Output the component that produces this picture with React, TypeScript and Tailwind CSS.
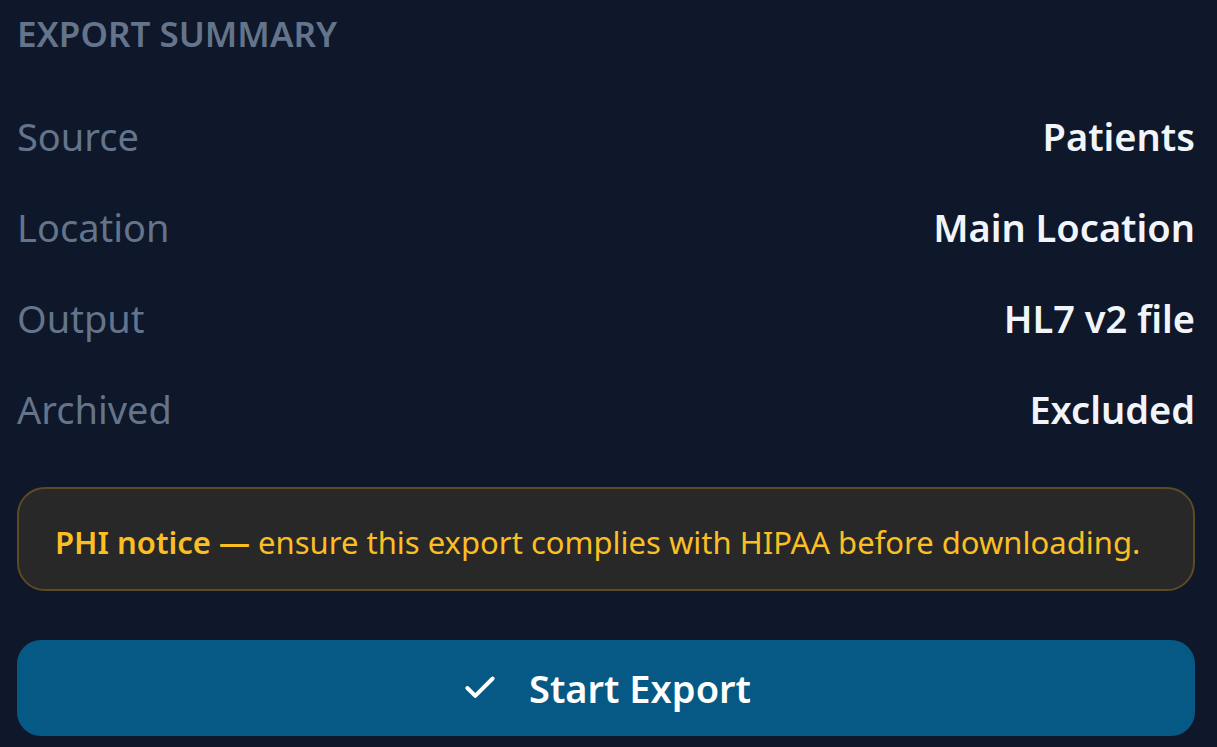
import { Check } from "lucide-react";

const rows = [
  { label: "Source", value: "Patients" },
  { label: "Location", value: "Main Location" },
  { label: "Output", value: "HL7 v2 file" },
  { label: "Archived", value: "Excluded" },
];

export default function App() {
  return (
    <div
      className="min-h-screen w-full bg-[#0f172a] pl-[17px] pr-[22px] pt-[8px]"
      style={{ fontFamily: '"Noto Sans", "Open Sans", sans-serif' }}
    >
      <h2 className="h-[52px] flex items-center text-[35px] font-semibold uppercase text-[#64748b]">
        Export Summary
      </h2>

      <div className="mt-[31px] flex flex-col">
        {rows.map((row) => (
          <div key={row.label} className="h-[91px] flex items-center justify-between">
            <span className="text-[38px] text-[#64748b]">{row.label}</span>
            <span className="text-[38px] font-semibold text-[#f1f5f9]">{row.value}</span>
          </div>
        ))}
      </div>

      <div className="mt-[32px] h-[104px] flex items-center rounded-[28px] border-2 border-[#5c4a22] bg-[#282828] px-[36px] pt-[6px]">
        <p className="text-[31px] text-[#fbbf24] whitespace-nowrap">
          <span className="font-semibold">PHI notice —</span> ensure this export complies with HIPAA before downloading.
        </p>
      </div>

      <button className="mt-[49px] h-[96px] w-full flex items-center justify-center gap-[30px] rounded-[24px] bg-[#075985] text-white">
        <Check className="w-[38px] h-[38px]" strokeWidth={2.5} />
        <span className="text-[38px] font-semibold">Start Export</span>
      </button>
    </div>
  );
}
